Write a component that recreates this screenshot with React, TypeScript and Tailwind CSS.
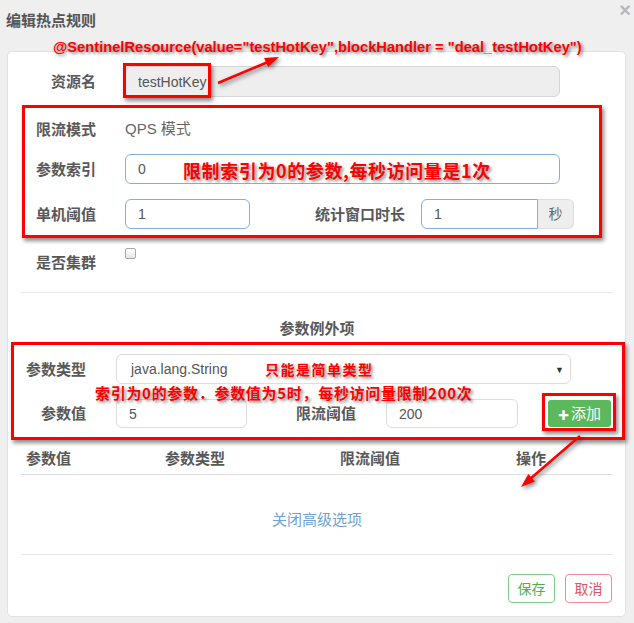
import React from 'react';

const font = "font-['Liberation_Sans','Noto_Sans_CJK_SC',sans-serif]";
const cjk = "font-['Noto_Sans_CJK_SC','Liberation_Sans',sans-serif]";
const redText = "absolute whitespace-nowrap font-bold text-[#ff0000] [text-shadow:2px_2px_3px_rgba(0,0,0,0.45)]";
const redBox = "absolute border-[3px] border-[#ff0000] shadow-[2px_3px_4px_rgba(0,0,0,0.45)] pointer-events-none";

const Label: React.FC<{ w: string; children: React.ReactNode }> = ({ w, children }) => (
    <div className={`${w} shrink-0 text-right text-[15px] font-bold text-[#585858] ${cjk}`}>{children}</div>
);

const Field: React.FC<{ value: string; className?: string }> = ({ value, className = "" }) => (
    <input
        readOnly
        value={value}
        className={`h-full rounded-[6px] border px-[12px] text-[14px] text-[#555] outline-none ${className}`}
    />
);

const App: React.FC = () => {
    return (
        <div className={`relative w-[634px] h-[623px] overflow-hidden bg-[#efefef] ${font}`}>
            {/* Modal header */}
            <div className="flex h-[51px] items-start justify-between pl-[6px] pr-[3px]">
                <h3 className={`mt-[10px] text-[15px] leading-[20px] font-bold text-[#555] ${cjk}`}>编辑热点规则</h3>
                <span className="mt-[1px] text-[20px] leading-[18px] font-bold text-[#b8b8b8]">×</span>
            </div>

            {/* Card */}
            <div className="ml-[7px] w-[619px] rounded-[5px] border border-[#e2e2e2] bg-white pl-[13px] pr-[12px] pt-[14px] pb-[13px]">
                <div className="flex h-[31px] items-center">
                    <Label w="w-[75px]">资源名</Label>
                    <Field value="testHotKey" className="ml-[29px] w-[435px] border-[#d5d5d5] bg-[#eee]" />
                </div>

                <div className="mt-[17px] flex h-[30px] items-center">
                    <Label w="w-[75px]">限流模式</Label>
                    <span className="ml-[29px] text-[15px] text-[#666]">QPS 模式</span>
                </div>

                <div className="mt-[10px] flex h-[30px] items-center">
                    <Label w="w-[75px]">参数索引</Label>
                    <Field value="0" className="ml-[29px] w-[435px] border-[#82afe0]" />
                </div>

                <div className="mt-[15px] flex h-[30px] items-center">
                    <Label w="w-[75px]">单机阈值</Label>
                    <Field value="1" className="ml-[29px] w-[125px] border-[#82afe0]" />
                    <Label w="w-[155px]">统计窗口时长</Label>
                    <div className="ml-[16px] flex h-full">
                        <Field value="1" className="w-[117px] rounded-r-none border-[#82afe0]" />
                        <span className="flex w-[36px] items-center justify-center rounded-r-[6px] border border-l-0 border-[#ddd] bg-[#eee] text-[14px] text-[#666]">秒</span>
                    </div>
                </div>

                <div className="mt-[17px] flex h-[32px]">
                    <div className="self-center">
                        <Label w="w-[75px]">是否集群</Label>
                    </div>
                    <span className="ml-[29px] mt-[2px] h-[11px] w-[11px] rounded-[2px] border border-[#a9a9a9] bg-gradient-to-b from-white to-[#e6e6e6]" />
                </div>

                <div className="mt-[14px] border-t border-[#e8e8e8]" />

                <div className={`mt-[25px] text-center text-[15px] leading-[20px] font-bold text-[#585858] ${cjk}`}>参数例外项</div>

                <div className="mt-[16px] flex h-[30px] items-center">
                    <Label w="w-[65px]">参数类型</Label>
                    <div className="relative ml-[30px] flex h-full w-[455px] items-center rounded-[6px] border border-[#ddd] pl-[14px] text-[14px] text-[#555]">
                        java.lang.String
                        <span className="absolute right-[6px] top-[9px] text-[9px] text-[#333]">▼</span>
                    </div>
                </div>

                <div className="mt-[15px] flex h-[29px] items-center">
                    <Label w="w-[65px]">参数值</Label>
                    <Field value="5" className="ml-[30px] w-[131px] border-[#ddd]" />
                    <Label w="w-[109px]">限流阈值</Label>
                    <Field value="200" className="ml-[30px] w-[132px] border-[#ddd]" />
                    <button className={`ml-[30px] flex h-[27px] w-[63px] items-center justify-center gap-[2px] rounded-[3px] bg-[#5cb85c] text-[15px] text-white ${cjk}`}>
                        <span className="text-[18px] leading-none font-black">+</span>添加
                    </button>
                </div>

                <div className={`mt-[18px] grid h-[29px] grid-cols-[139px_175px_176px_1fr] border-b border-[#e0e0e0] pl-[5px] text-[15px] leading-[24px] font-bold text-[#585858] ${cjk}`}>
                    <span>参数值</span>
                    <span>参数类型</span>
                    <span>限流阈值</span>
                    <span>操作</span>
                </div>

                <div className={`mt-[34px] text-center text-[15px] leading-[20px] text-[#6ea1d5] ${cjk}`}>关闭高级选项</div>

                <div className="mt-[25px] border-t border-[#e8e8e8]" />

                <div className={`mt-[19px] flex h-[29px] justify-end gap-[10px] pr-[1px] text-[14px] ${cjk}`}>
                    <button className="w-[47px] rounded-[4px] border border-[#7fcf8c] text-[#4cae4c]">保存</button>
                    <button className="w-[47px] rounded-[4px] border border-[#ec8a93] text-[#e0525e]">取消</button>
                </div>
            </div>

            {/* Annotations laid over the form */}
            <div className={`${redText} left-[53px] top-[38px] text-[14.7px] leading-[18px]`}>
                @SentinelResource(value="testHotKey",blockHandler = "deal_testHotKey")
            </div>
            <div className={`${redBox} left-[123px] top-[63px] h-[35px] w-[88px]`} />
            <div className={`${redBox} left-[22px] top-[105px] h-[133px] w-[580px]`} />
            <div className={`${redText} ${cjk} left-[183px] top-[158px] text-[18px] leading-[24px] tracking-[0.6px]`}>
                限制索引为0的参数,每秒访问量是1次
            </div>
            <div className={`${redBox} left-[11px] top-[342px] h-[98px] w-[614px]`} />
            <div className={`${redText} ${cjk} left-[265px] top-[359px] text-[14px] leading-[20px] tracking-[1.5px]`}>
                只能是简单类型
            </div>
            <div className={`${redText} ${cjk} left-[95px] top-[383px] text-[15px] leading-[20px] tracking-[0.7px]`}>
                索引为0的参数．参数值为5时，每秒访问量限制200次
            </div>
            <div className={`${redBox} left-[542px] top-[393px] h-[38px] w-[74px]`} />

            <svg
                className="pointer-events-none absolute left-0 top-0 drop-shadow-[2px_2px_2px_rgba(0,0,0,0.5)]"
                width="634"
                height="623"
                viewBox="0 0 634 623"
            >
                <line x1="218" y1="83" x2="268" y2="62" stroke="#ff0000" strokeWidth="2.5" />
                <polygon points="279,57 268.1,67.1 264.1,57.9" fill="#ff0000" />
                <line x1="580" y1="436" x2="530" y2="479" stroke="#ff0000" strokeWidth="2.5" />
                <polygon points="521,487 534.9,481.6 528.3,474" fill="#ff0000" />
            </svg>
        </div>
    );
};

export default App;
